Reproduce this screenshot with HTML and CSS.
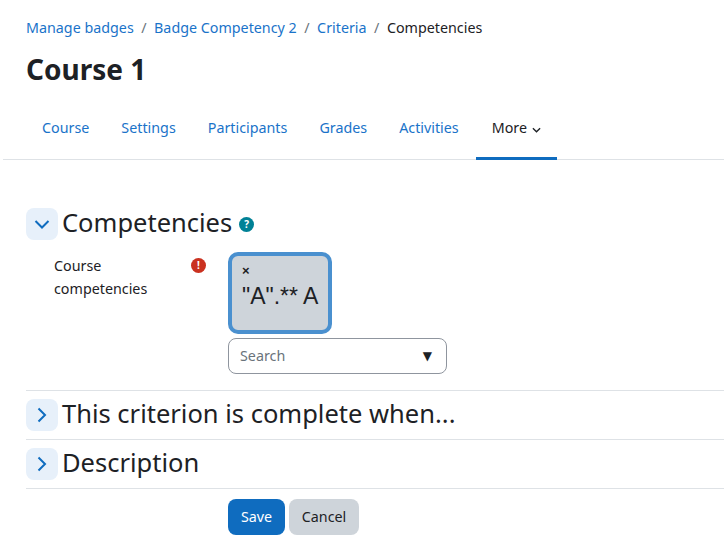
FILE: index.html
```html
<!DOCTYPE html>
<html lang="en">
<head>
    <meta charset="UTF-8">
    <meta name="viewport" content="width=device-width, initial-scale=1.0">
    <title>Competencies</title>
    <link rel="stylesheet" href="styles.css">
</head>
<body>
    <header class="page-header">
        <nav class="breadcrumb">
            <a href="#">Manage badges</a><span class="sep">/</span>
            <a href="#">Badge Competency 2</a><span class="sep">/</span>
            <a href="#">Criteria</a><span class="sep">/</span>
            <span>Competencies</span>
        </nav>
        <h1>Course 1</h1>
    </header>

    <ul class="tabs">
        <li><a href="#">Course</a></li>
        <li><a href="#">Settings</a></li>
        <li><a href="#">Participants</a></li>
        <li><a href="#">Grades</a></li>
        <li><a href="#">Activities</a></li>
        <li class="active">
            <a href="#">More
                <svg class="caret" viewBox="0 0 10 6" width="9" height="6"><path d="M1 1l4 4 4-4" fill="none" stroke="currentColor" stroke-width="1.5"/></svg>
            </a>
        </li>
    </ul>

    <form class="badge-form">
        <section class="fieldset first">
            <div class="legend">
                <span class="toggle">
                    <svg viewBox="0 0 16 16" width="16" height="16"><path d="M1.5 5L8 11.5 14.5 5" fill="none" stroke="currentColor" stroke-width="2"/></svg>
                </span>
                <h2>Competencies</h2>
                <span class="help-icon">?</span>
            </div>
            <div class="form-row">
                <div class="form-label">
                    <label>Course competencies</label>
                    <span class="required-icon">!</span>
                </div>
                <div class="form-field">
                    <div class="chip">
                        <span class="chip-x">×</span>
                        <span class="chip-text">"A".** A</span>
                    </div>
                    <div class="search-box">
                        <span class="search-text">Search</span>
                        <span class="arrow">▼</span>
                    </div>
                </div>
            </div>
        </section>

        <section class="fieldset">
            <div class="legend">
                <span class="toggle">
                    <svg viewBox="0 0 16 16" width="16" height="16"><path d="M4.5 1.5L11 8l-6.5 6.5" fill="none" stroke="currentColor" stroke-width="2"/></svg>
                </span>
                <h2>This criterion is complete when...</h2>
            </div>
        </section>

        <section class="fieldset">
            <div class="legend">
                <span class="toggle">
                    <svg viewBox="0 0 16 16" width="16" height="16"><path d="M4.5 1.5L11 8l-6.5 6.5" fill="none" stroke="currentColor" stroke-width="2"/></svg>
                </span>
                <h2>Description</h2>
            </div>
        </section>

        <div class="actions">
            <button type="button" class="btn btn-primary">Save</button>
            <button type="button" class="btn btn-secondary">Cancel</button>
        </div>
    </form>
</body>
</html>
```

FILE: styles.css
```css
body {
    margin: 0;
    font-family: "Noto Sans", sans-serif;
    font-size: 14.3px;
    line-height: 23px;
    color: #1d2125;
    background-color: white;
    overflow: hidden;
}

a {
    color: #1a73c9;
    text-decoration: none;
}

.page-header {
    padding: 16px 26px 0;
}

.breadcrumb {
    display: flex;
    height: 23px;
}

.sep {
    margin: 0 7.5px;
    color: #6a737b;
}

h1 {
    margin: 13px 0 0;
    font-size: 28px;
    line-height: 34px;
    font-weight: 700;
}

/* tabs */
.tabs {
    display: flex;
    list-style: none;
    margin: 11px 0 0 3px;
    padding: 0 0 0 23px;
    height: 62px;
    border-bottom: 1px solid #dee2e6;
}

.tabs li {
    padding: 0 16px;
    line-height: 62px;
    height: 63px;
    box-sizing: border-box;
}

.tabs li.active {
    margin-left: 1px;
    border-bottom: 3px solid #0f6cbf;
}

.tabs li.active a {
    color: #1d2125;
}

.caret {
    margin-left: 1px;
}

/* form */
.badge-form {
    padding: 48px 0 0 26px;
}

.fieldset {
    border-bottom: 1px solid #dee2e6;
    padding-bottom: 8px;
    margin-bottom: 8px;
}

.legend {
    display: flex;
    align-items: center;
    height: 32px;
}

.toggle {
    display: flex;
    align-items: center;
    justify-content: center;
    width: 32px;
    height: 32px;
    margin-right: 4px;
    border-radius: 8px;
    background-color: #e7f0fa;
    color: #0f6cbf;
}

h2 {
    margin: 0 0 4px;
    font-size: 25.5px;
    font-weight: 400;
    line-height: 28px;
}

.help-icon {
    width: 15px;
    height: 15px;
    margin-left: 7px;
    border-radius: 50%;
    background-color: #008196;
    color: white;
    font-size: 10px;
    font-weight: 700;
    line-height: 15px;
    text-align: center;
}

.form-row {
    display: flex;
    margin-top: 12px;
    padding-bottom: 8px;
}

.form-label {
    display: flex;
    justify-content: space-between;
    width: 152px;
    margin-left: 28px;
    margin-right: 22px;
    padding-top: 2px;
}

.form-label label {
    width: 110px;
}

.required-icon {
    width: 15px;
    height: 15px;
    margin-top: 4px;
    border-radius: 50%;
    background-color: #ca3120;
    color: white;
    font-size: 10px;
    font-weight: 700;
    line-height: 15px;
    text-align: center;
}

.chip {
    display: flex;
    flex-direction: column;
    box-sizing: border-box;
    width: 104px;
    height: 82px;
    padding: 8px 10px;
    border: 4px solid #4a90cf;
    border-radius: 10px;
    background-color: #ced4da;
    font-family: "Liberation Sans", sans-serif;
}

.chip-x {
    font-size: 13px;
    font-weight: 700;
    line-height: 14px;
}

.chip-text {
    font-size: 23px;
    line-height: 36px;
    white-space: nowrap;
}

.search-box {
    display: flex;
    justify-content: space-between;
    align-items: center;
    box-sizing: border-box;
    width: 219px;
    height: 36px;
    margin-top: 4px;
    padding: 0 14px 0 11px;
    border: 1px solid #8f959e;
    border-radius: 8px;
    color: #6a737b;
}

.search-text {
    padding-bottom: 2px;
}

.arrow {
    color: #1d2125;
    font-family: "DejaVu Sans", sans-serif;
    font-size: 12px;
}

.actions {
    display: flex;
    gap: 4px;
    margin: 10px 0 0 202px;
}

.btn {
    height: 36px;
    padding: 0 12px 2px;
    border: none;
    border-radius: 8px;
    font-family: inherit;
    font-size: 14.3px;
}

.btn-primary {
    width: 57px;
    background-color: #0f6cbf;
    color: white;
}

.btn-secondary {
    width: 70px;
    background-color: #ced4da;
    color: #1d2125;
}
```
